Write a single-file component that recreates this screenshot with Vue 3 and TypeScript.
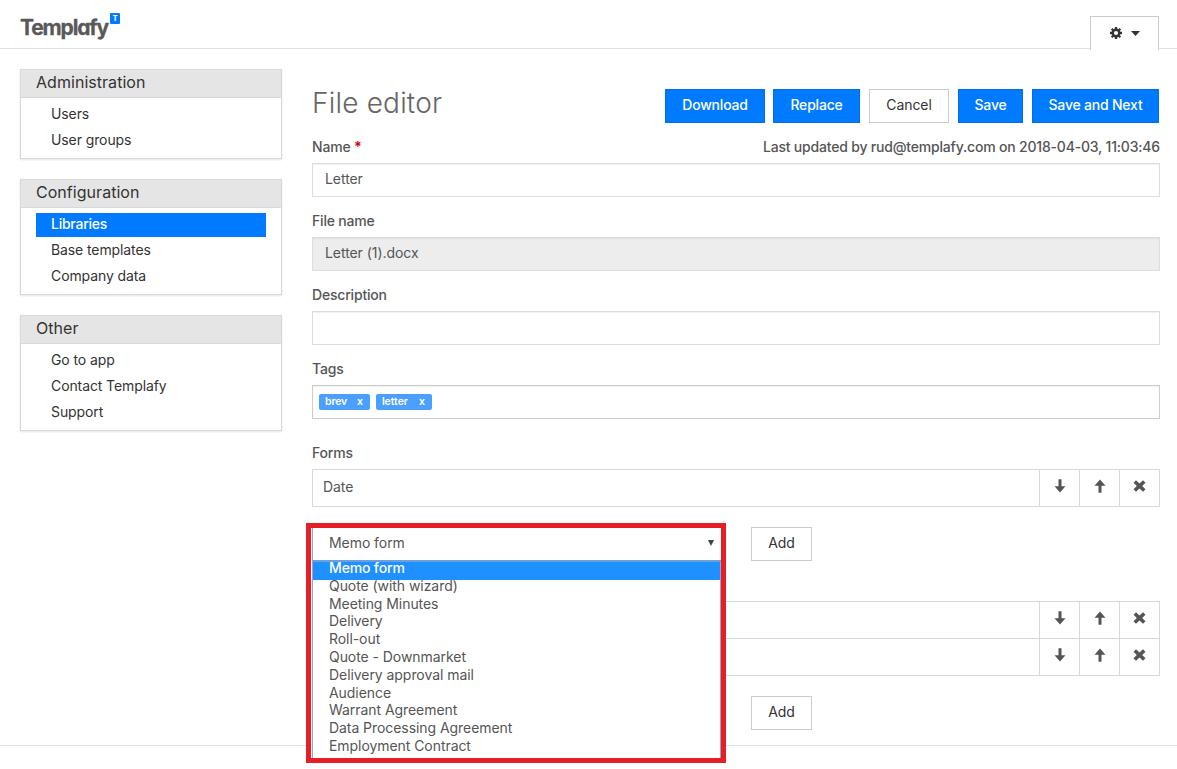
<script setup lang="ts">
interface NavItem {
  label: string
  active?: boolean
}
interface NavGroup {
  title: string
  items: NavItem[]
}

const groups: NavGroup[] = [
  { title: 'Administration', items: [{ label: 'Users' }, { label: 'User groups' }] },
  {
    title: 'Configuration',
    items: [{ label: 'Libraries', active: true }, { label: 'Base templates' }, { label: 'Company data' }],
  },
  { title: 'Other', items: [{ label: 'Go to app' }, { label: 'Contact Templafy' }, { label: 'Support' }] },
]

const tags: string[] = ['brev', 'letter']

const options: string[] = [
  'Memo form',
  'Quote (with wizard)',
  'Meeting Minutes',
  'Delivery',
  'Roll-out',
  'Quote - Downmarket',
  'Delivery approval mail',
  'Audience',
  'Warrant Agreement',
  'Data Processing Agreement',
  'Employment Contract',
]

const lists: string[][] = [['Date'], ['', '']]

const downArrow = 'M5.5 0.3h3v7h4L7 13.6 1.5 7.3h4z'
const upArrow = 'M5.5 13.7h3v-7h4L7 0.4 1.5 6.7h4z'
const cross = 'M3 1.2L6.5 4.5 10 1.2 12.5 3.7 9.2 7 12.5 10.3 10 12.8 6.5 9.5 3 12.8 0.5 10.3 3.8 7 0.5 3.7z'
const actions: string[] = [downArrow, upArrow, cross]
</script>

<template>
  <div class="page">
    <header class="topbar">
      <div class="logo">
        <span class="word">Templafy</span>
        <span class="badge">T</span>
      </div>
      <button class="settings">
        <svg class="gear" viewBox="0 0 12 12" width="12" height="12">
          <circle cx="6" cy="6" r="3.3" fill="none" stroke="#333" stroke-width="2.4" />
          <g stroke="#333" stroke-width="2.3">
            <path d="M6 0v2M6 10v2M0 6h2M10 6h2M1.7 1.7l1.5 1.5M8.8 8.8l1.5 1.5M1.7 10.3l1.5-1.5M8.8 3.2l1.5-1.5" />
          </g>
        </svg>
        <svg viewBox="0 0 9 5" width="9" height="5"><path d="M0 0h9L4.5 5z" fill="#333" /></svg>
      </button>
    </header>

    <div class="columns">
      <nav class="sidebar">
        <section v-for="g in groups" :key="g.title" class="panel">
          <h2>{{ g.title }}</h2>
          <ul>
            <li v-for="i in g.items" :key="i.label" :class="{ active: i.active }">{{ i.label }}</li>
          </ul>
        </section>
      </nav>

      <main class="editor">
        <div class="heading">
          <h1>File editor</h1>
          <div class="buttons">
            <button class="btn primary download">Download</button>
            <button class="btn primary replace">Replace</button>
            <button class="btn cancel">Cancel</button>
            <button class="btn primary save">Save</button>
            <button class="btn primary next">Save and Next</button>
          </div>
        </div>

        <div class="label">
          <span>Name <b>*</b></span>
          <span class="updated">Last updated by rud@templafy.com on 2018-04-03, 11:03:46</span>
        </div>
        <div class="field">Letter</div>
        <div class="label"><span>File name</span></div>
        <div class="field disabled">Letter (1).docx</div>
        <div class="label"><span>Description</span></div>
        <div class="field"></div>
        <div class="label"><span>Tags</span></div>
        <div class="field tags">
          <span v-for="t in tags" :key="t" class="tag"><span>{{ t }}</span><span>x</span></span>
        </div>

        <div class="label forms"><span>Forms</span></div>
        <template v-for="(rows, n) in lists" :key="n">
          <div class="rows">
            <div v-for="(r, k) in rows" :key="k" class="row">
              <span class="name">{{ r }}</span>
              <span v-for="d in actions" :key="d" class="action">
                <svg viewBox="0 0 13 14" width="13" height="14"><path :d="d" fill="#555" /></svg>
              </span>
            </div>
          </div>
          <div class="adder">
            <button class="btn add">Add</button>
            <div v-if="n === 0" class="dropdown">
              <div class="select">
                <span>Memo form</span>
                <svg viewBox="0 0 6 6" width="6" height="6"><path d="M0 0h6L3 6z" fill="#444" /></svg>
              </div>
              <ul>
                <li v-for="(o, i) in options" :key="o" :class="{ chosen: i === 0 }">{{ o }}</li>
              </ul>
            </div>
          </div>
        </template>
      </main>
    </div>
    <footer></footer>
  </div>
</template>

<style>
body {
  margin: 0;
  overflow: hidden;
}
</style>

<style scoped>
* {
  box-sizing: border-box;
}
.page {
  height: 769px;
  display: flex;
  flex-direction: column;
  background: #fff;
  color: #555;
  font: 14px/20px Inter, 'Liberation Sans', sans-serif;
  letter-spacing: -0.06px;
  white-space: nowrap;
}
ul,
h1,
h2 {
  margin: 0;
  padding: 0;
  list-style: none;
  font-weight: 400;
}
button {
  font: inherit;
  letter-spacing: inherit;
  padding: 0;
}
.topbar {
  height: 49px;
  flex: none;
  display: flex;
  justify-content: space-between;
  padding: 0 18px 0 20px;
  border-bottom: 1px solid #e0e0e0;
}
.logo {
  display: flex;
}
.word {
  width: 90px;
  margin-top: 14px;
  font-size: 21px;
  line-height: 28px;
  font-weight: 700;
  letter-spacing: -1.15px;
  font-feature-settings: 'cv11';
  color: #595959;
  -webkit-text-stroke: 0.3px #595959;
}
.badge {
  width: 10px;
  height: 11px;
  margin-top: 13px;
  border-radius: 1px;
  background: #007aff;
  color: #fff;
  font-size: 7px;
  line-height: 11px;
  font-weight: 800;
  text-align: center;
}
.settings {
  position: relative;
  width: 69px;
  height: 34px;
  margin-top: 16px;
  padding-bottom: 1px;
  display: flex;
  align-items: center;
  justify-content: center;
  gap: 9px;
  background: #fff;
  border: 1px solid #ccc;
  border-bottom: 0;
}
.columns {
  display: flex;
  gap: 30px;
  padding: 20px 17px 0 20px;
  height: 696px;
  flex: none;
}
.sidebar {
  width: 262px;
  display: flex;
  flex-direction: column;
  gap: 20px;
}
.panel {
  border: 1px solid #d8d8d8;
  box-shadow: 0 1px 2px rgba(0, 0, 0, 0.1);
  color: #333;
}
.panel h2 {
  height: 28px;
  padding-left: 15px;
  line-height: 25px;
  font-size: 16px;
  letter-spacing: 0.04px;
  background: #e5e5e5;
  border-bottom: 1px solid #d8d8d8;
}
.panel ul {
  display: flex;
  flex-direction: column;
  gap: 2px;
  padding: 5px 15px;
}
.panel li {
  height: 24px;
  padding-left: 15px;
  line-height: 22px;
  letter-spacing: -0.1px;
}
.panel li.active {
  background: #007aff;
  color: #fff;
  font-weight: 500;
  letter-spacing: -0.25px;
}
.editor {
  width: 848px;
}
.heading {
  display: flex;
  justify-content: space-between;
  height: 68px;
  padding: 20px 1px 0 0;
}
h1 {
  font-size: 28px;
  line-height: 28px;
  font-weight: 300;
  letter-spacing: 0.2px;
  color: #666;
}
.buttons {
  display: flex;
}
.btn {
  height: 34px;
  padding-bottom: 2px;
  background: #fff;
  border: 1px solid #ccc;
  color: #333;
}
.primary {
  background: #007aff;
  border-color: #006ee6;
  color: #fff;
  font-weight: 500;
  letter-spacing: -0.2px;
}
.download {
  width: 100px;
}
.replace {
  width: 87px;
  margin-left: 8px;
}
.cancel {
  width: 80px;
  margin: 0 9px;
}
.save {
  width: 65px;
  margin-right: 9px;
}
.next {
  width: 127px;
}
.label {
  display: flex;
  justify-content: space-between;
  height: 26px;
  font-weight: 500;
  letter-spacing: -0.19px;
}
.label b {
  color: #d0021b;
}
.field {
  height: 34px;
  margin: 0 0 14px;
  padding: 5px 12px;
  border: 1px solid #ddd;
  box-shadow: inset 0 1px 1px rgba(0, 0, 0, 0.06);
}
.disabled {
  background: #ededed;
}
.tags {
  display: flex;
  gap: 6px;
  padding: 8px 6px;
  border-color: #ccc;
}
.tag {
  display: flex;
  gap: 10px;
  height: 16px;
  padding: 0 7px 0 6px;
  border-radius: 2px;
  background: #4ba0ff;
  color: #fff;
  font-size: 10.5px;
  line-height: 15px;
  font-weight: 600;
  letter-spacing: -0.15px;
}
.tag + .tag {
  gap: 11px;
  letter-spacing: -0.05px;
}
.forms {
  padding-top: 10px;
  height: 36px;
}
.rows {
  border: 1px solid #d8d8d8;
}
.row {
  display: flex;
  height: 36px;
}
.row + .row {
  height: 37px;
  border-top: 1px solid #d8d8d8;
}
.name {
  flex: 1;
  padding: 7px 10px;
}
.action {
  width: 40px;
  border-left: 1px solid #d8d8d8;
  display: flex;
  justify-content: center;
  padding-top: 9px;
}
.adder {
  position: relative;
  padding: 20px 0 40px 439px;
}
.add {
  display: block;
  width: 61px;
}
.dropdown {
  position: absolute;
  z-index: 2;
  left: -6px;
  top: 16px;
  width: 420px;
  height: 240px;
  padding-left: 1px;
  border: 5px solid #e61e26;
  background: #fff;
}
.select {
  display: flex;
  align-items: center;
  justify-content: space-between;
  height: 34px;
  padding: 0 7px 2px 17px;
  border-bottom: 2px solid #6aa0dc;
  border-left: 1px solid #9aa5cc;
  padding-left: 16px;
}
.dropdown ul {
  border: solid #9aa5cc;
  border-width: 0 1px;
  height: 196px;
}
.dropdown li {
  height: 17.8px;
  padding-left: 16px;
  line-height: 12px;
}
.dropdown .chosen {
  height: 17.8px;
  background: #1e90ff;
  color: #fff;
  font-weight: 500;
  letter-spacing: -0.15px;
}
footer {
  border-top: 1px solid #e2e2e2;
}
</style>
